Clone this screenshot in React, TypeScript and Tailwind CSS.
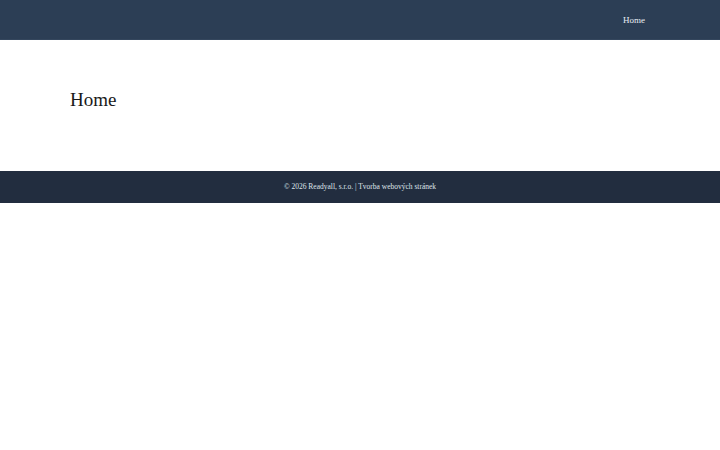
export default function App() {
  return (
    <div className="min-h-[450px] bg-white" style={{ fontFamily: '"Liberation Serif", "DejaVu Serif", serif' }}>
      <header className="h-[40px] bg-[#2c3e55] border-b border-[#34465d] flex items-center justify-end pr-[75px] pt-[2px]">
        <a className="text-[9px] text-[#e8edf3] leading-none">Home</a>
      </header>
      <main className="h-[131px] px-[70px] pt-[49px]">
        <h1 className="text-[19px] leading-[22px] text-[#1a1a1a]">Home</h1>
      </main>
      <footer className="h-[32px] bg-[#222d3f] flex items-center justify-center">
        <p className="text-[7.5px] text-[#dfe4ea] leading-none">© 2026 Readyall, s.r.o. | Tvorba webových stránek</p>
      </footer>
    </div>
  );
}
